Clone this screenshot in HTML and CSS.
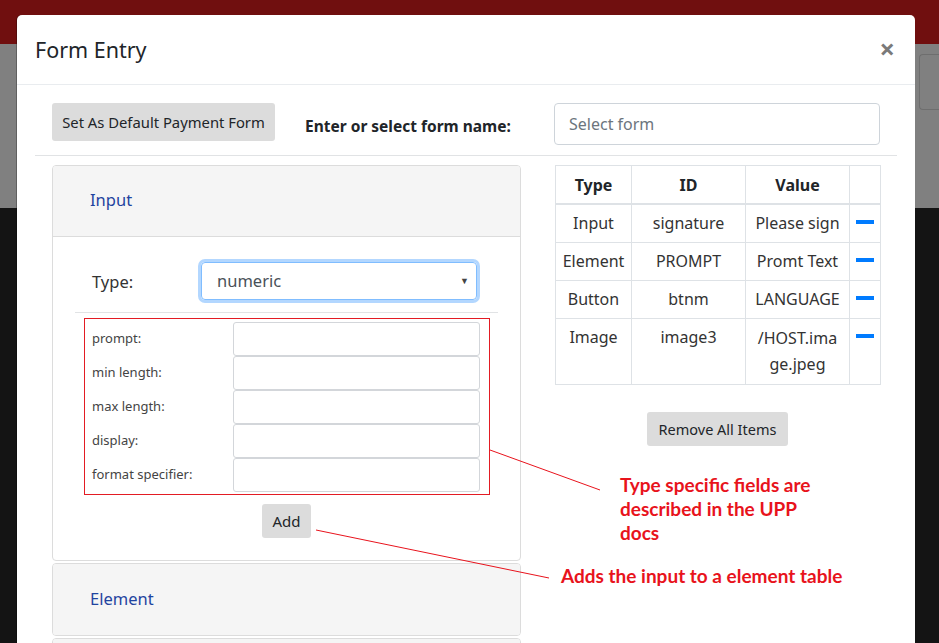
FILE: index.html
```html
<!DOCTYPE html>
<html>
<head>
<meta charset="utf-8">
<link rel="stylesheet" href="styles.css">
</head>
<body>
<div class="page">
  <div class="topbar"></div>
  <div class="subbar"><div class="ghost-input"></div></div>
  <div class="rest"></div>
</div>

<div class="modal">
  <div class="modal-header">
    <h1 class="modal-title">Form Entry</h1>
    <span class="close">&times;</span>
  </div>
  <div class="modal-body">
    <div class="top-row">
      <button class="btn btn-default-form">Set As Default Payment Form</button>
      <label class="form-name-label">Enter or select form name:</label>
      <div class="text-input placeholder">Select form</div>
    </div>
    <div class="columns">
      <div class="left-col">
        <div class="card">
          <div class="card-header"><span class="card-link">Input</span></div>
          <div class="card-body">
            <div class="type-row">
              <span class="type-label">Type:</span>
              <div class="select">numeric<span class="caret">&#9660;</span></div>
            </div>
            <div class="field-box">
              <div class="field-row"><span class="field-label">prompt:</span><div class="field-input"></div></div>
              <div class="field-row"><span class="field-label">min length:</span><div class="field-input"></div></div>
              <div class="field-row"><span class="field-label">max length:</span><div class="field-input"></div></div>
              <div class="field-row"><span class="field-label">display:</span><div class="field-input"></div></div>
              <div class="field-row"><span class="field-label">format specifier:</span><div class="field-input"></div></div>
            </div>
            <div class="center"><button class="btn btn-add">Add</button></div>
          </div>
        </div>
        <div class="card collapsed">
          <div class="card-header"><span class="card-link">Element</span></div>
        </div>
        <div class="card collapsed">
          <div class="card-header"></div>
        </div>
      </div>
      <div class="right-col">
        <table class="items">
          <colgroup><col class="c1"><col class="c2"><col class="c3"><col class="c4"></colgroup>
          <thead>
            <tr><th>Type</th><th>ID</th><th>Value</th><th></th></tr>
          </thead>
          <tbody>
            <tr><td>Input</td><td>signature</td><td>Please sign</td><td><span class="minus"></span></td></tr>
            <tr><td>Element</td><td>PROMPT</td><td>Promt Text</td><td><span class="minus"></span></td></tr>
            <tr><td>Button</td><td>btnm</td><td>LANGUAGE</td><td><span class="minus"></span></td></tr>
            <tr><td>Image</td><td>image3</td><td class="wrap">/HOST.image.jpeg</td><td><span class="minus"></span></td></tr>
          </tbody>
        </table>
        <div class="center"><button class="btn btn-remove">Remove All Items</button></div>
      </div>
    </div>
  </div>
</div>

<svg class="annot-lines" width="939" height="643" viewBox="0 0 939 643">
  <line x1="490" y1="450" x2="600" y2="490" stroke="#e8131c" stroke-width="1"/>
  <line x1="316" y1="530" x2="549" y2="578" stroke="#e8131c" stroke-width="1"/>
</svg>
<div class="annot annot-1">Type specific fields are<br>described in the UPP<br>docs</div>
<div class="annot annot-2">Adds the input to a element table</div>
</body>
</html>
```

FILE: styles.css
```css
* { box-sizing: border-box; }
html, body { margin: 0; padding: 0; height: 100%; }
body {
  width: 939px;
  height: 643px;
  overflow: hidden;
  font-family: "Noto Sans", "Open Sans", sans-serif;
  color: #212529;
  position: relative;
  background: #141414;
}
.page { display: flex; flex-direction: column; height: 643px; }
.topbar { height: 44px; background: #700f0f; }
.subbar { height: 164px; background: #808080; display: flex; justify-content: flex-end; padding-top: 10px; }
.ghost-input { width: 20px; height: 56px; border: 1px solid #6e6e6e; border-right: none; border-radius: 4px 0 0 4px; }
.rest { flex: 1; background: #141414; }

.modal {
  position: absolute;
  left: 17px;
  top: 15px;
  width: 898px;
  height: 628px;
  overflow: hidden;
  background: #fff;
  border-radius: 5px 5px 0 0;
  box-shadow: -1px 0 0 rgba(0,0,0,0.25);
}
.modal-header {
  height: 70px;
  border-bottom: 1px solid #e9ecef;
  display: flex;
  align-items: center;
  justify-content: space-between;
  padding: 0 20px 0 18px;
}
.modal-title {
  margin: 0;
  font-size: 21.5px;
  font-weight: 400;
  color: #212529;
}
.close { font-size: 27px; font-weight: 700; color: #7a7a7a; line-height: 1; margin-top: -2px; }

.modal-body { padding: 18px 18px 0 18px; }
.top-row {
  display: flex;
  align-items: flex-start;
  padding: 0 17px 10px 17px;
  border-bottom: 1px solid #e1e3e5;
  height: 53px;
}
.btn {
  border: none;
  background: #dcdcdc;
  border-radius: 3px;
  font-family: inherit;
  color: #212529;
  padding: 0 10px;
}
.btn-default-form { height: 38px; font-size: 14.8px; width: 223px; padding: 0; }
.form-name-label { font-weight: 700; font-size: 15.5px; margin-left: 30px; width: 249px; line-height: 46px; }
.text-input {
  width: 326px;
  height: 42px;
  border: 1px solid #ced4da;
  border-radius: 4px;
  padding: 0 14px;
  font-size: 16px;
  line-height: 40px;
  color: #6c757d;
}

.columns { display: flex; padding: 9px 17px 0 17px; gap: 34px; }
.left-col { width: 469px; display: flex; flex-direction: column; gap: 2px; }
.right-col { width: 325px; }

.card { border: 1px solid #dcdcdc; border-radius: 4px; overflow: hidden; flex-shrink: 0; }
.card-header {
  height: 71px;
  background: #f5f5f5;
  border-bottom: 1px solid #dcdcdc;
  padding-left: 37px;
  padding-bottom: 3px;
  display: flex;
  align-items: center;
}
.card.collapsed .card-header { border-bottom: none; }
.card-link { color: #1f44a0; font-size: 16.5px; }
.card-body { padding: 22px 22px 22px 22px; }

.type-row {
  display: flex;
  align-items: center;
  padding: 0 0 9px 17px;
  border-bottom: 1px solid #e1e3e5;
}
.type-label { width: 109px; font-size: 16.5px; color: #333; }
.select {
  position: relative;
  width: 276px;
  height: 38px;
  margin: 3px 0;
  border: 1px solid #80bdff;
  border-radius: 4px;
  box-shadow: 0 0 0 3px #b3d7ff;
  padding: 0 15px;
  font-size: 16.5px;
  line-height: 36px;
  color: #495057;
}
.caret { position: absolute; right: 7px; top: 0; font-size: 9px; color: #444; }

.field-box {
  margin: 5px 8px 0 9px;
  border: 1px solid #e31b23;
  padding: 3px 9px 2px 7px;
  display: flex;
  flex-direction: column;
}
.field-row { display: flex; align-items: flex-start; height: 34px; }
.field-label { width: 141px; font-size: 13px; color: #444; padding-top: 7px; }
.field-input { width: 247px; height: 34px; border: 1px solid #d3d6da; border-radius: 3px; }

.center { display: flex; justify-content: center; }
.btn-add { margin-top: 9px; height: 34px; width: 49px; font-size: 15px; padding: 0; }

.items { border-collapse: collapse; width: 325px; table-layout: fixed; font-size: 16px; }
.items col.c1 { width: 76px; }
.items col.c2 { width: 114px; }
.items col.c3 { width: 104px; }
.items col.c4 { width: 31px; }
.items th, .items td {
  border: 1px solid #dee2e6;
  text-align: center;
  vertical-align: top;
  padding: 6px 0 7px 0;
  line-height: 24px;
  color: #333;
}
.items th { font-weight: 700; color: #212529; border-bottom: 2px solid #dee2e6; padding: 7px 0 6px 0; }
.items td.wrap { word-break: break-all; padding: 6px 8px 7px 8px; line-height: 26px; }
.minus { display: inline-block; width: 18px; height: 4px; background: #007bff; vertical-align: top; margin-top: 9px; }
.btn-remove { margin-top: 27px; height: 34px; width: 141px; font-size: 14.5px; padding: 0; }

.annot-lines { position: absolute; left: 0; top: 0; pointer-events: none; }
.annot {
  position: absolute;
  color: #e8131c;
  font-family: "Lato", "Noto Sans", sans-serif;
  font-weight: 700;
  font-size: 19px;
  line-height: 24px;
}
.annot-1 { left: 620px; top: 473px; }
.annot-2 { left: 561px; top: 564px; }
```
